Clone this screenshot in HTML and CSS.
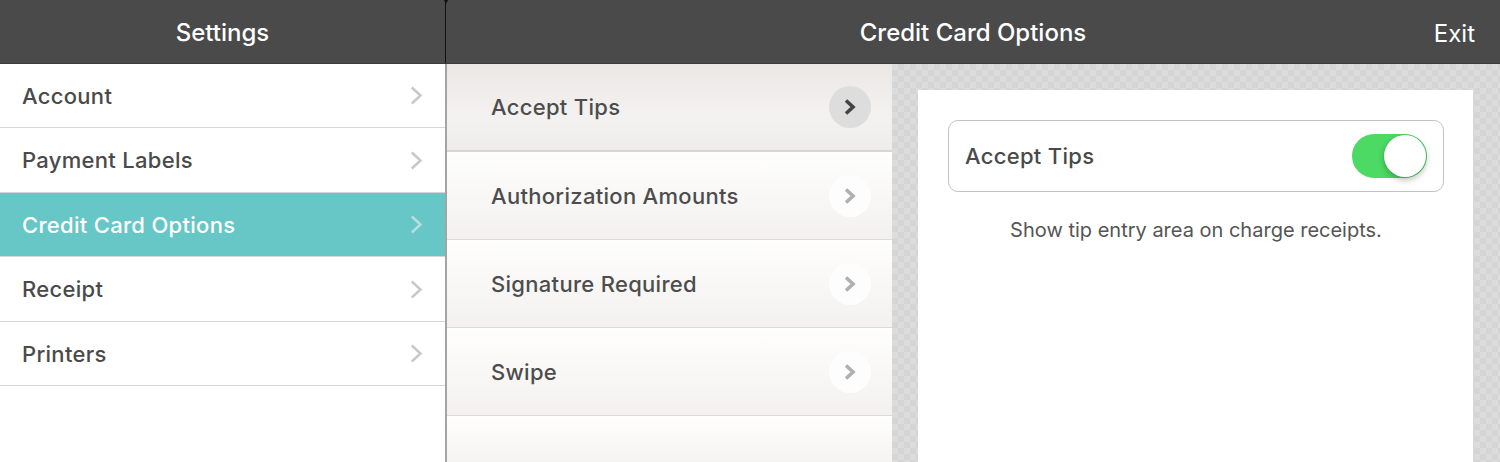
FILE: index.html
```html
<!DOCTYPE html>
<html>
<head>
<meta charset="utf-8">
<link rel="stylesheet" href="styles.css">
</head>
<body>
<div class="app">
  <header class="topbar">
    <div class="tb-left">Settings</div>
    <div class="tb-right">
      <span class="tb-title">Credit Card Options</span>
      <span class="tb-exit">Exit</span>
    </div>
  </header>
  <div class="main">
    <nav class="sidebar">
      <div class="side-row"><span>Account</span><svg class="chev" width="13" height="19" viewBox="0 0 13 19"><path d="M1.8 1.5 L10.5 9.5 L1.8 17.5" fill="none" stroke="currentColor" stroke-width="2.5"/></svg></div>
      <div class="side-row"><span>Payment Labels</span><svg class="chev" width="13" height="19" viewBox="0 0 13 19"><path d="M1.8 1.5 L10.5 9.5 L1.8 17.5" fill="none" stroke="currentColor" stroke-width="2.5"/></svg></div>
      <div class="side-row active"><span>Credit Card Options</span><svg class="chev" width="13" height="19" viewBox="0 0 13 19"><path d="M1.8 1.5 L10.5 9.5 L1.8 17.5" fill="none" stroke="currentColor" stroke-width="2.5"/></svg></div>
      <div class="side-row"><span>Receipt</span><svg class="chev" width="13" height="19" viewBox="0 0 13 19"><path d="M1.8 1.5 L10.5 9.5 L1.8 17.5" fill="none" stroke="currentColor" stroke-width="2.5"/></svg></div>
      <div class="side-row"><span>Printers</span><svg class="chev" width="13" height="19" viewBox="0 0 13 19"><path d="M1.8 1.5 L10.5 9.5 L1.8 17.5" fill="none" stroke="currentColor" stroke-width="2.5"/></svg></div>
    </nav>
    <section class="submenu">
      <div class="sub-row selected"><span>Accept Tips</span><span class="circle"><svg width="14" height="20" viewBox="0 0 14 20"><path d="M3 3.5 L10 10 L3 16.5" fill="none" stroke="currentColor" stroke-width="3.6"/></svg></span></div>
      <div class="sub-row"><span>Authorization Amounts</span><span class="circle"><svg width="14" height="20" viewBox="0 0 14 20"><path d="M3 3.5 L10 10 L3 16.5" fill="none" stroke="currentColor" stroke-width="3.6"/></svg></span></div>
      <div class="sub-row"><span>Signature Required</span><span class="circle"><svg width="14" height="20" viewBox="0 0 14 20"><path d="M3 3.5 L10 10 L3 16.5" fill="none" stroke="currentColor" stroke-width="3.6"/></svg></span></div>
      <div class="sub-row"><span>Swipe</span><span class="circle"><svg width="14" height="20" viewBox="0 0 14 20"><path d="M3 3.5 L10 10 L3 16.5" fill="none" stroke="currentColor" stroke-width="3.6"/></svg></span></div>
      <div class="sub-fill"></div>
    </section>
    <section class="detail">
      <div class="card">
        <div class="option-box">
          <span>Accept Tips</span>
          <span class="toggle"><span class="knob"></span></span>
        </div>
        <p class="desc">Show tip entry area on charge receipts.</p>
      </div>
    </section>
  </div>
</div>
</body>
</html>
```

FILE: styles.css
```css
html, body {
  margin: 0;
  padding: 0;
  width: 1500px;
  height: 462px;
  overflow: hidden;
  font-family: Inter, "Liberation Sans", Arial, sans-serif;
}

.app {
  display: flex;
  flex-direction: column;
  height: 462px;
}

.topbar {
  height: 64px;
  background: #4a4a4a;
  display: flex;
  color: #fff;
  font-size: 24px;
  border-bottom: 1px solid #3a3a3a;
  box-sizing: border-box;
}

.tb-left {
  width: 445px;
  border-right: 1px solid #111;
  display: flex;
  align-items: center;
  justify-content: center;
  font-weight: 500;
  padding-top: 2px;
  position: relative;
}

.tb-left::after {
  content: "";
  position: absolute;
  right: -3px;
  top: 0;
  border-left: 2.5px solid transparent;
  border-right: 2.5px solid transparent;
  border-top: 4px solid #111;
}

.tb-right {
  flex: 1;
  display: flex;
  align-items: center;
  justify-content: center;
  position: relative;
  padding-top: 2px;
}

.tb-title {
  font-weight: 500;
}

.tb-exit {
  position: absolute;
  right: 25px;
  top: 50%;
  transform: translateY(-45%);
  font-size: 24px;
  font-weight: 400;
}

.main {
  flex: 1;
  display: flex;
  min-height: 0;
}

.sidebar {
  width: 445px;
  background: #fff;
  border-right: 2px solid #a4a4a4;
  display: flex;
  flex-direction: column;
}

.side-row {
  height: 64px;
  border-bottom: 1px solid #d6d6d6;
  display: flex;
  align-items: center;
  justify-content: space-between;
  padding: 0 22px;
  font-size: 22px;
  letter-spacing: 0.3px;
  font-weight: 500;
  color: #4a4a4a;
  box-sizing: border-box;
  flex-shrink: 0;
}

.side-row:nth-child(2) { height: 65px; }
.side-row:nth-child(4) { height: 65px; }

.side-row .chev {
  color: #c8c8cc;
  margin-right: 0;
}

.side-row.active {
  background: #67c6c6;
  color: #fff;
}

.side-row.active .chev {
  color: #b9dede;
}

.submenu {
  width: 445px;
  display: flex;
  flex-direction: column;
  background: #f6f4f2;
}

.sub-row {
  height: 88px;
  border-bottom: 1px solid #dddad8;
  box-sizing: border-box;
  display: flex;
  align-items: center;
  justify-content: space-between;
  padding: 0 21px 0 44px;
  font-size: 22px;
  letter-spacing: 0.3px;
  font-weight: 500;
  color: #4d4d4d;
  background: linear-gradient(#fefefd, #f3f1ef);
  flex-shrink: 0;
}

.sub-row.selected {
  background: linear-gradient(#eae7e5 0%, #f4f2f0 60%, #efedeb 100%);
  border-bottom: 2px solid #d8d5d3;
}

.circle {
  width: 42px;
  height: 42px;
  border-radius: 50%;
  background: #fdfdfd;
  color: #b0b0b0;
  display: flex;
  align-items: center;
  justify-content: center;
}

.sub-row.selected .circle {
  background: #dddddd;
  color: #444;
}

.sub-fill {
  flex: 1;
  background: linear-gradient(#fefefd, #f6f4f2);
}

.detail {
  flex: 1;
  background-color: #d9d9d9;
  background-image: conic-gradient(#d5d5d5 25%, #dcdcdc 0 50%, #d5d5d5 0 75%, #dcdcdc 0);
  background-size: 12px 12px;
  padding: 26px 27px 0 26px;
  display: flex;
}

.card {
  flex: 1;
  background: #fff;
  padding: 30px 29px 0 30px;
}

.option-box {
  height: 72px;
  border: 1px solid #c2c2c2;
  border-radius: 10px;
  box-sizing: border-box;
  display: flex;
  align-items: center;
  justify-content: space-between;
  padding: 0 16px 0 16px;
  font-size: 22px;
  letter-spacing: 0.3px;
  font-weight: 500;
  color: #4a4a4a;
}

.toggle {
  width: 75px;
  height: 44px;
  border-radius: 22px;
  background: #4cd964;
  position: relative;
  display: block;
}

.knob {
  position: absolute;
  right: 1px;
  top: 1px;
  width: 42px;
  height: 42px;
  border-radius: 50%;
  background: #fff;
  box-shadow: 0 3px 6px rgba(0,0,0,0.25), 0 0 0 1px rgba(0,0,0,0.04);
}

.desc {
  margin: 26px 0 0;
  text-align: center;
  font-size: 20px;
  color: #555;
}
```
